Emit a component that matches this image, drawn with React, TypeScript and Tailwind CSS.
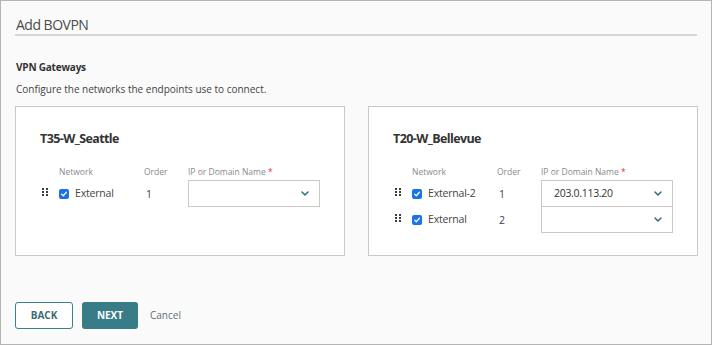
import React from "react";

type Row = { name: string; order: number; value?: string };

function DragHandle() {
  return (
    <div className="grid grid-cols-2 gap-x-[2px] gap-y-[1px] w-[6px] mt-[-3px]">
      {Array.from({ length: 6 }).map((_, i) => (
        <span key={i} className="block w-[2px] h-[2px] bg-[#3c3c3c]" />
      ))}
    </div>
  );
}

function Check() {
  return (
    <span className="flex items-center justify-center w-[10px] h-[10px] rounded-[2px] bg-[#1a73e8] shrink-0">
      <svg viewBox="0 0 10 10" className="w-[8px] h-[8px]">
        <path d="M2 5.2 L4.1 7.2 L8 2.8" fill="none" stroke="#fff" strokeWidth="1.6" strokeLinecap="round" strokeLinejoin="round" />
      </svg>
    </span>
  );
}

function Chevron() {
  return (
    <svg viewBox="0 0 8 5" className="w-[8px] h-[5px]">
      <path d="M1 1 L4 4 L7 1" fill="none" stroke="#2f6f7a" strokeWidth="1.5" strokeLinecap="round" strokeLinejoin="round" />
    </svg>
  );
}

function GatewayCard({ title, rows }: { title: string; rows: Row[] }) {
  return (
    <div className="w-[330px] h-[150px] shrink-0 bg-white border border-[#c9c9c9] pl-[26px] pt-[23px]">
      <div className="text-[12.5px] leading-[18px] font-bold text-[#333] tracking-[-0.6px] ml-[-2px]">{title}</div>
      <div className="grid grid-cols-[17px_85px_44px_132px] mt-[18px] text-[8.5px] leading-[12px] text-[#8a8a8a]">
        <span />
        <span>Network</span>
        <span>Order</span>
        <span>
          IP or Domain Name <span className="text-[#d9363e]">*</span>
        </span>
      </div>
      <div className="mt-[2px]">
        {rows.map((r, i) => (
          <div
            key={i}
            className={`grid grid-cols-[17px_85px_44px_132px] h-[27px] items-center text-[10.5px] tracking-[-0.2px] text-[#444] ${i > 0 ? "mt-[-1px]" : ""}`}
          >
            <DragHandle />
            <div className="flex items-center gap-[6px]">
              <Check />
              <span>{r.name}</span>
            </div>
            <span className="pl-[2px] pt-[2px]">{r.order}</span>
            <div className="h-[27px] border border-[#c9c9c9] bg-white flex items-center justify-between pl-[12px] pr-[10px]">
              <span className="text-[10.5px] tracking-[-0.3px] text-[#333] pt-[1px]">{r.value ?? ""}</span>
              <Chevron />
            </div>
          </div>
        ))}
      </div>
    </div>
  );
}

export default function App() {
  return (
    <div
      className="w-[712px] h-[345px] border border-[#b4b4b4] bg-[#fafafa] px-[14px] overflow-hidden"
      style={{ fontFamily: '"Open Sans", "Liberation Sans", sans-serif' }}
    >
      <div className="pt-[14px] h-[35px] border-b-2 border-[#d6d6d6]">
        <div className="text-[14px] leading-[20px] tracking-[-0.5px] text-[#4a4a4a] pl-[1px]">Add BOVPN</div>
      </div>
      <div className="mt-[23px] text-[10px] leading-[16px] font-bold tracking-[-0.2px] text-[#333] pl-[1px]">VPN Gateways</div>
      <div className="mt-[6px] text-[10px] leading-[16px] text-[#444] pl-[1px]">
        Configure the networks the endpoints use to connect.
      </div>
      <div className="flex gap-[23px] mt-[9px]">
        <GatewayCard title="T35-W_Seattle" rows={[{ name: "External", order: 1 }]} />
        <GatewayCard
          title="T20-W_Bellevue"
          rows={[
            { name: "External-2", order: 1, value: "203.0.113.20" },
            { name: "External", order: 2 },
          ]}
        />
      </div>
      <div className="flex items-center mt-[46px]">
        <button className="w-[58px] h-[27px] rounded-[3px] border border-[#3b7f8a] bg-white text-[10px] font-bold text-[#3d6b74]">
          BACK
        </button>
        <button className="ml-[9px] w-[56px] h-[27px] rounded-[3px] bg-[#377c87] text-[10px] font-bold text-white">
          NEXT
        </button>
        <span className="ml-[12px] text-[10px] text-[#5f6d75]">Cancel</span>
      </div>
    </div>
  );
}
